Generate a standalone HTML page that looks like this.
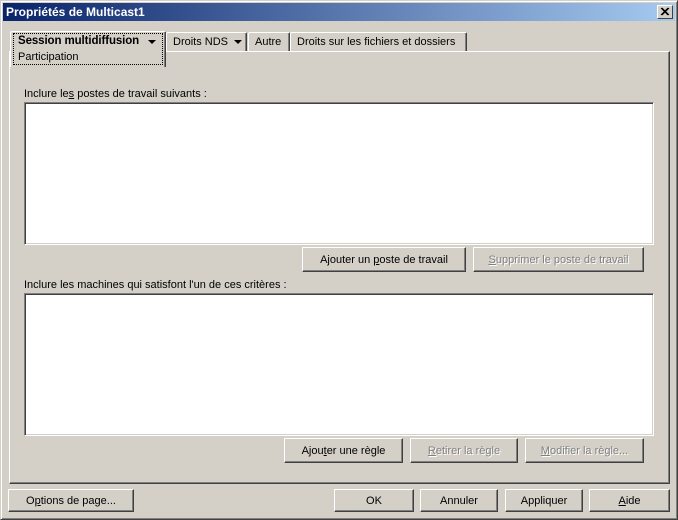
<!DOCTYPE html>
<html><head><meta charset="utf-8"><style>
*{box-sizing:border-box;margin:0;padding:0}
body{width:678px;height:520px;background:#d4d0c8;font-family:"Liberation Sans",sans-serif;font-size:11px;color:#000;position:relative;overflow:hidden}
.win{position:absolute;left:0;top:0;width:678px;height:520px;border-top:1px solid #d4d0c8;border-left:1px solid #d4d0c8;border-right:1px solid #404040;border-bottom:1px solid #404040;box-shadow:inset 1px 1px 0 #fff,inset -1px -1px 0 #808080}
.title{position:absolute;left:3px;top:3px;width:672px;height:18px;background:linear-gradient(to right,#0a246a,#a6caf0);color:#fff;font-weight:bold;font-size:12px;line-height:18px;padding-left:3px}
.close{position:absolute;left:657px;top:5px;width:16px;height:14px;background:#d4d0c8;border-top:1px solid #fff;border-left:1px solid #fff;border-right:1px solid #404040;border-bottom:1px solid #404040}
.a{position:absolute;white-space:nowrap}
.panel{position:absolute;left:9px;top:51px;width:661px;height:433px;border-top:1px solid #fff;border-left:1px solid #fff;border-right:1px solid #404040;border-bottom:1px solid #404040;box-shadow:inset -1px -1px 0 #808080}
.tab{position:absolute;height:19px;background:#d4d0c8;border-top:1px solid #fff;border-left:1px solid #fff;border-right:1px solid #404040;box-shadow:inset -1px 0 0 #808080;padding:3px 6px;white-space:nowrap;border-radius:2px 2px 0 0}
.list{position:absolute;background:#fff;border-top:1px solid #808080;border-left:1px solid #808080;border-right:1px solid #fff;border-bottom:1px solid #fff;box-shadow:inset 1px 1px 0 #404040,inset -1px -1px 0 #d4d0c8}
.btn{position:absolute;height:25px;background:#d4d0c8;border-top:1px solid #fff;border-left:1px solid #fff;border-right:1px solid #404040;border-bottom:1px solid #404040;box-shadow:inset -1px -1px 0 #808080;text-align:center;line-height:24px;white-space:nowrap}
.dis{color:#808080;text-shadow:1px 1px 0 #fff}
u{text-decoration:underline}
.arr{display:inline-block;width:0;height:0;border-left:4px solid transparent;border-right:4px solid transparent;border-top:4px solid #000;vertical-align:middle;margin-left:6px}
</style></head><body>
<div class="win"></div>
<div class="title">Propriétés de Multicast1</div>
<div class="close"><svg width="14" height="12" style="position:absolute;left:0;top:0"><path d="M3 2 L10 9 M4 2 L11 9 M10 2 L3 9 M11 2 L4 9" stroke="#000" stroke-width="1"/></svg></div>
<div class="panel"></div>
<div class="tab" style="left:166px;top:32px;width:81px">Droits NDS<span class="arr"></span></div>
<div class="tab" style="left:248px;top:32px;width:42px">Autre</div>
<div class="tab" style="left:290px;top:32px;width:177px">Droits sur les fichiers et dossiers</div>
<div class="a" style="left:10px;top:31px;width:156px;height:36px;background:#d4d0c8;border-top:1px solid #fff;border-left:1px solid #fff;border-right:1px solid #404040;box-shadow:inset -1px 0 0 #808080;border-radius:2px 2px 0 0"></div>
<div class="a" style="left:13px;top:33px;width:150px;height:32px;border:1px dotted #000"></div>
<div class="a" style="left:18px;top:35px;font-weight:bold;font-size:11.5px;letter-spacing:-0.1px">Session multidiffusion</div>
<div class="a" style="left:148px;top:40px;width:0;height:0;border-left:4px solid transparent;border-right:4px solid transparent;border-top:4px solid #000"></div>
<div class="a" style="left:18px;top:51px">Participation</div>
<div class="a" style="left:24px;top:88px">Inclure le<u>s</u> postes de travail suivants :</div>
<div class="list" style="left:24px;top:102px;width:630px;height:143px"></div>
<div class="btn" style="left:302px;top:247px;width:164px">Ajouter un <u>p</u>oste de travail</div>
<div class="btn dis" style="left:473px;top:247px;width:171px"><u>S</u>upprimer le poste de travail</div>
<div class="a" style="left:24px;top:279px">Inclure les machines qui satisfont l'un de ces critères :</div>
<div class="list" style="left:24px;top:293px;width:630px;height:143px"></div>
<div class="btn" style="left:284px;top:438px;width:119px">Ajou<u>t</u>er une règle</div>
<div class="btn dis" style="left:410px;top:438px;width:108px"><u>R</u>etirer la règle</div>
<div class="btn dis" style="left:525px;top:438px;width:119px"><u>M</u>odifier la règle...</div>
<div class="btn" style="left:8px;top:489px;width:126px;height:23px;line-height:23px">O<u>p</u>tions de page...</div>
<div class="btn" style="left:334px;top:489px;width:80px;height:23px;line-height:23px">OK</div>
<div class="btn" style="left:420px;top:489px;width:78px;height:23px;line-height:23px">Annuler</div>
<div class="btn" style="left:505px;top:489px;width:78px;height:23px;line-height:23px">Appliquer</div>
<div class="btn" style="left:589px;top:489px;width:81px;height:23px;line-height:23px"><u>A</u>ide</div>
</body></html>
